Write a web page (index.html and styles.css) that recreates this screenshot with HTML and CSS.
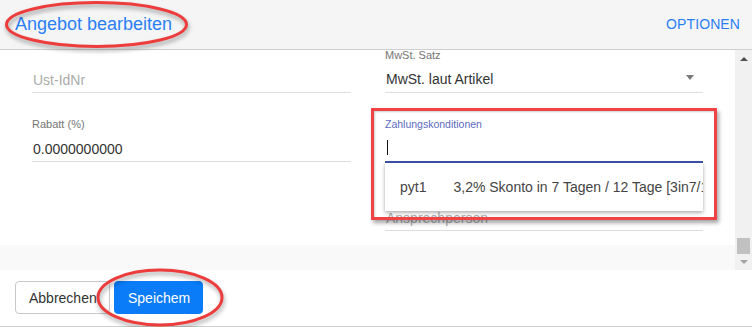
FILE: index.html
```html
<!DOCTYPE html>
<html lang="de">
<head>
<meta charset="utf-8">
<title>Angebot bearbeiten</title>
<link rel="stylesheet" href="styles.css">
</head>
<body>
<div class="app">
  <header class="header">
    <span class="title">Angebot bearbeiten</span>
    <span class="options">OPTIONEN</span>
  </header>

  <main class="main">
    <div class="scroll">
      <div class="form">
        <div class="field">
          <div class="label"></div>
          <div class="input placeholder">Ust-IdNr</div>
        </div>
        <div class="field">
          <div class="label">MwSt. Satz</div>
          <div class="input select"><span>MwSt. laut Artikel</span><span class="caret"></span></div>
        </div>
        <div class="field">
          <div class="label">Rabatt (%)</div>
          <div class="input">0.0000000000</div>
        </div>
        <div class="field focused">
          <div class="label">Zahlungskonditionen</div>
          <div class="input"><span class="cursor"></span></div>
          <div class="menu">
            <div class="menu-item"><span class="code">pyt1</span><span class="desc">3,2% Skonto in 7 Tagen / 12 Tage [3in7/12]</span></div>
          </div>
        </div>
        <div class="field empty"></div>
        <div class="field">
          <div class="label"></div>
          <div class="input placeholder">Ansprechperson</div>
        </div>
      </div>
      <div class="form-end"></div>
    </div>
    <div class="scrollbar">
      <span class="arrow up"></span>
      <span class="track"></span>
      <span class="thumb"></span>
      <span class="arrow down"></span>
    </div>
  </main>

  <footer class="footer">
    <button class="btn btn-default">Abbrechen</button>
    <button class="btn btn-primary">Speichem</button>
  </footer>

  <div class="mark-box"></div>
  <svg class="mark-ellipse mark-title" width="200" height="56" viewBox="0 0 200 56">
    <ellipse cx="96.5" cy="24.5" rx="90" ry="22" fill="none" stroke="#ec3c3c" stroke-width="3"/>
  </svg>
  <svg class="mark-ellipse mark-save" width="140" height="65" viewBox="0 0 140 65">
    <ellipse cx="70" cy="34.5" rx="62" ry="27.5" fill="none" stroke="#ec3c3c" stroke-width="3"/>
  </svg>
</div>
</body>
</html>
```

FILE: styles.css
```css
* { box-sizing: border-box; }

html, body {
  margin: 0;
  padding: 0;
  background: #fff;
}

body {
  font-family: "Liberation Sans", Arial, sans-serif;
  color: #333;
}

.app {
  position: relative;
  width: 752px;
  height: 327px;
  display: flex;
  flex-direction: column;
  overflow: hidden;
}

/* Header */
.header {
  height: 50px;
  flex: none;
  background: #f5f5f5;
  border-bottom: 1px solid #cfcfcf;
  display: flex;
  align-items: center;
  justify-content: space-between;
  padding: 0 12px 1px 15px;
}

.title {
  font-size: 18px;
  color: #2a7ff5;
}

.options {
  font-size: 14px;
  color: #2a7ff5;
  letter-spacing: 0.1px;
}

/* Main scroll region */
.main {
  height: 220px;
  flex: none;
  display: flex;
}

.scroll {
  flex: 1;
  overflow: hidden;
  display: flex;
  flex-direction: column;
}

.form {
  display: grid;
  grid-template-columns: 319px 318px;
  column-gap: 34px;
  row-gap: 24px;
  padding: 0 32px 14px 32px;
  margin-top: -2px;
  background: #fff;
}

.form-end {
  flex: 1;
  background: #f9f9f9;
}

.field {
  position: relative;
  height: 45px;
  display: flex;
  flex-direction: column;
  border-bottom: 1px solid #dedede;
}

.field.empty {
  border-bottom: none;
}

.label {
  height: 14px;
  line-height: 14px;
  font-size: 11px;
  color: #757575;
}

.input {
  height: 30px;
  line-height: 30px;
  padding-top: 3px;
  font-size: 14px;
  color: #333;
  padding-left: 1px;
  white-space: nowrap;
}

.input.placeholder {
  color: #ababab;
}

.select {
  display: flex;
  justify-content: space-between;
  align-items: center;
  line-height: normal;
  padding-right: 9px;
}

.caret {
  width: 0;
  height: 0;
  border-left: 4px solid transparent;
  border-right: 4px solid transparent;
  border-top: 5px solid #7a7a7a;
  margin-top: -3px;
}

.focused {
  border-bottom: 1px solid #3f51b5;
  box-shadow: 0 1px 0 #3f51b5;
}

.focused .label {
  color: #5c6bc0;
  font-size: 10.5px;
}

.focused .input {
  display: flex;
  align-items: center;
}

.cursor {
  display: block;
  width: 1px;
  height: 15px;
  margin-left: 1px;
  background: #111;
}

.menu {
  position: absolute;
  left: 0;
  top: 46px;
  width: 318px;
  height: 48px;
  background: #fff;
  box-shadow: 0 2px 4px rgba(0, 0, 0, 0.28), 0 0 2px rgba(0, 0, 0, 0.12);
  overflow: hidden;
  z-index: 2;
}

.menu-item {
  height: 48px;
  display: flex;
  align-items: center;
  padding-left: 15px;
  font-size: 14px;
  color: #444;
  white-space: nowrap;
}

.menu-item .desc {
  margin-left: 27px;
}

/* Scrollbar */
.scrollbar {
  width: 17px;
  flex: none;
  background: #f1f1f1;
  position: relative;
  display: flex;
  flex-direction: column;
  align-items: center;
  padding: 7px 0 6px 0;
}

.arrow {
  width: 0;
  height: 0;
  border-left: 4px solid transparent;
  border-right: 4px solid transparent;
}

.arrow.up {
  border-bottom: 4px solid #505050;
}

.arrow.down {
  border-top: 4px solid #a3a3a3;
}

.track {
  flex: 1;
}

.thumb {
  width: 13px;
  height: 16px;
  background: #c1c1c1;
  margin-bottom: 6px;
}

/* Footer */
.footer {
  flex: 1;
  border-bottom: 1px solid #cfcfcf;
  display: flex;
  align-items: flex-start;
  gap: 4px;
  padding: 11px 15px 0 15px;
}

.btn {
  height: 33px;
  font-family: "Liberation Sans", Arial, sans-serif;
  font-size: 14px;
  border-radius: 4px;
  padding: 0 13px;
  cursor: pointer;
}

.btn-default {
  background: #fff;
  border: 1px solid #c8c8c8;
  color: #333;
  width: 95px;
}

.btn-primary {
  background: #0a7cf7;
  border: 1px solid #0a7cf7;
  color: #fff;
  width: 89px;
}

/* Annotation overlays */
.mark-box {
  position: absolute;
  left: 371px;
  top: 108px;
  width: 346px;
  height: 112px;
  border: 3px solid #f04346;
  box-shadow: 2px 3px 4px rgba(0, 0, 0, 0.35), inset 1px 1px 2px rgba(0, 0, 0, 0.2);
  z-index: 5;
}

.mark-ellipse {
  position: absolute;
  z-index: 6;
  filter: drop-shadow(1px 3px 2px rgba(0, 0, 0, 0.35));
}

.mark-title {
  left: 0;
  top: 0;
}

.mark-save {
  left: 90px;
  top: 263px;
}
```
